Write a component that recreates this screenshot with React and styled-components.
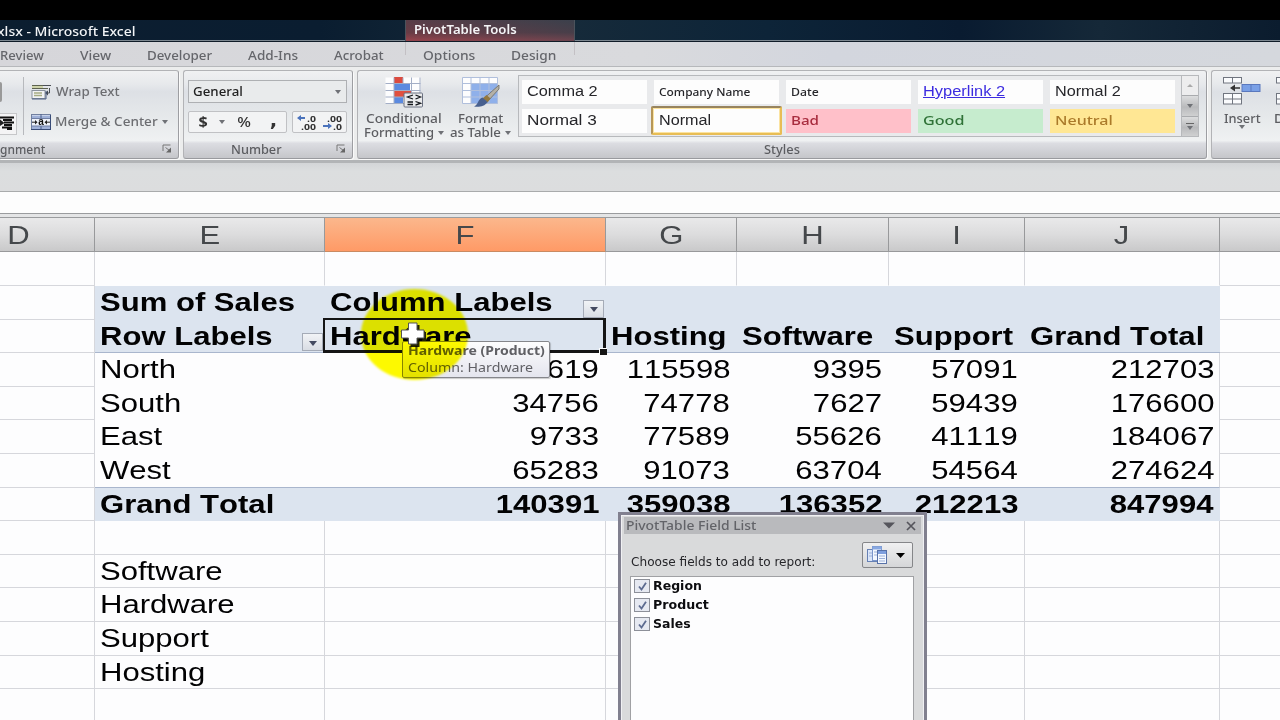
import { useLayoutEffect, useRef, useState } from 'react';
import styled, { createGlobalStyle, css } from 'styled-components';

const TABS = [
  { label: 'Review', w: 44 },
  { label: 'View', w: 31 },
  { label: 'Developer', w: 65 },
  { label: 'Add-Ins', w: 50 },
  { label: 'Acrobat', w: 50 },
  { label: 'Options', w: 52, ml: 3 },
  { label: 'Design', w: 45 },
];

const STYLES = [
  { label: 'Comma 2', w: 71, arial: true },
  { label: 'Company Name', w: 92, small: true },
  { label: 'Date', w: 28, small: true },
  { label: 'Hyperlink 2', w: 82, arial: true, color: '#3c2ce0', underline: true },
  { label: 'Normal 2', w: 66, arial: true },
  { label: 'Normal 3', w: 70, arial: true },
  { label: 'Normal', w: 52, arial: true, selected: true },
  { label: 'Bad', w: 28, color: '#a82c3e', bg: '#ffc0c9' },
  { label: 'Good', w: 41, color: '#2f7237', bg: '#c6ecce' },
  { label: 'Neutral', w: 58, color: '#ab7a2a', bg: '#ffe794' },
];

const COLUMNS = ['D', 'E', 'F', 'G', 'H', 'I', 'J', ''];

const PIVOT = [
  ['North', '26619', '115598', '9395', '57091', '212703'],
  ['South', '34756', '74778', '7627', '59439', '176600'],
  ['East', '9733', '77589', '55626', '41119', '184067'],
  ['West', '65283', '91073', '63704', '54564', '274624'],
];

const PRODUCTS = ['', 'Software', 'Hardware', 'Support', 'Hosting', ''];

// Stretches its text horizontally to exactly w pixels
function Fit({ w, children }) {
  const ref = useRef(null);
  const [scale, setScale] = useState(1);

  useLayoutEffect(() => {
    setScale(w / ref.current.offsetWidth);
  }, [w]);

  return (
    <FitBox $w={w}>
      <FitText ref={ref} style={{ transform: `scaleX(${scale})` }}>
        {children}
      </FitText>
    </FitBox>
  );
}

function WrapIcon() {
  return (
    <svg width="21" height="16" viewBox="0 0 21 16">
      <path d="M1 1.5h13M1 4.5h16" stroke="#5d6250" />
      <path d="M1 3h11" stroke="#c9cf9a" strokeWidth="1.6" />
      <path d="M12 1.5h8M18.5 4v5h-3" stroke="#4b4f55" fill="none" />
      <path d="M17 6.5v5l-3-2.5z" fill="#444a55" />
      <rect x="1" y="6.5" width="13" height="8" fill="#f2f3f4" stroke="#8a919d" />
      <path d="M3 9h8M3 11.5h8" stroke="#a7ac82" strokeWidth="1.4" />
      <path d="M1 15h14V7" stroke="#4c5e83" fill="none" />
    </svg>
  );
}

function MergeIcon() {
  return (
    <svg width="20" height="16" viewBox="0 0 20 16">
      <rect x=".5" y=".5" width="19" height="15" fill="#eef2fa" stroke="#71809f" />
      <path d="M1 3h18M1 13.5h18" stroke="#9fb1d8" strokeWidth="3" />
      <path d="M10 0v4M10 12v4" stroke="#4a5e8b" />
      <path d="M0 4.5h20M0 12h20" stroke="#6f7fa4" />
      <path d="M1 8.2h4M15 8.2h4" stroke="#222" />
      <path d="M4 6l2.5 2.2L4 10.5zM16 6l-2.5 2.2 2.5 2.3z" fill="#222" />
      <text x="10" y="11.3" textAnchor="middle" fontSize="10" fontWeight="bold" fontFamily="Liberation Sans" fill="#111">a</text>
      <path d="M0 15.5h20M19.5 1v14" stroke="#394c77" />
    </svg>
  );
}

function AlignIcon() {
  return (
    <svg width="14" height="14" viewBox="0 0 14 14">
      <path d="M0 1.5h14M3 4h9M4 6.5h10M4 9h8M2 11.5h10M7 13.5h5" stroke="#111" strokeWidth="1.8" />
      <path d="M0 3.5L4.5 7 0 10z" fill="#222" />
    </svg>
  );
}

function DecimalIcon({ increase }) {
  return (
    <svg width="21" height="17" viewBox="0 0 21 17">
      <g fontFamily="Open Sans" fontSize="9.5" fontWeight="700" fill="#333">
        <text x="20" y="7.5" textAnchor="end" textLength={increase ? 9 : 15} lengthAdjust="spacingAndGlyphs">{increase ? '.0' : '.00'}</text>
        <text x="20" y="15.5" textAnchor="end" textLength={increase ? 15 : 9} lengthAdjust="spacingAndGlyphs">{increase ? '.00' : '.0'}</text>
      </g>
      {increase ? (
        <path d="M1 4l4-3v2h4v2H5v2z" fill="#4a72bb" />
      ) : (
        <path d="M10 12L6 9v2H1v2h5v2z" fill="#4a72bb" />
      )}
    </svg>
  );
}

function ConditionalIcon() {
  return (
    <svg width="38" height="31" viewBox="0 0 38 31">
      <rect x=".5" y=".5" width="35" height="26" fill="#fdfdfe" />
      <path d="M9 0h9v6H9z" fill="#dc4b3f" />
      <path d="M9 7h16v6H9z" fill="#5b8ae0" />
      <path d="M9 14h17v6H9z" fill="#e0503f" />
      <path d="M9 20h9v7H9z" fill="#5b8ae0" />
      <path d="M.5 6.5h35M.5 13.5h35M.5 20h35M.5 26.5h20M9 .5v26M18 .5v6M26.5 .5v15M35 .5v17" stroke="#a3aec6" fill="none" />
      <rect x="19" y="16" width="18.5" height="14" rx="1" fill="#e9eaec" stroke="#6a7080" />
      <path d="M28 18l-5.5 2 5.5 2M22.5 25H28M22.5 27.5H28M30.5 18l5 2-5 2M30.5 24.5l5 1.7-5 2" stroke="#15181d" strokeWidth="1.3" fill="none" />
    </svg>
  );
}

function FormatTableIcon() {
  return (
    <svg width="38" height="31" viewBox="0 0 38 31">
      <rect x=".5" y=".5" width="35" height="26" fill="#fdfdfe" />
      <path d="M9 6.5h27v20H9z" fill="#8fb0ea" />
      <path d="M.5 .5h35M.5 6.5h35M.5 13.5h35M.5 20h35M.5 26.5h35M.5 .5v26M9 .5v26M18 .5v26M27 .5v26M35.5 .5v26" stroke="#b0bfdc" fill="none" />
      <path d="M37 8L23 20.500l3.500 3L37 12z" fill="#b5b1a6" stroke="#6b6861" strokeWidth=".8" />
      <path d="M24.500 18l4 3.500-3 4-5-4z" fill="#94793f" />
      <path d="M20.500 20.500l5 4.500c-3 5-9 5-13.500 4.500 4-1 4-8 8.500-9z" fill="#48608f" />
    </svg>
  );
}

function InsertIcon() {
  return (
    <svg width="38" height="29" viewBox="0 0 38 29">
      <g fill="#fafbfd" stroke="#70757f">
        <rect x=".5" y=".5" width="18" height="5.5" />
        <rect x=".5" y="16.5" width="18" height="10.5" />
        <path d="M9.5 .5V6M9.5 16.5V27M.5 22h18" />
      </g>
      <rect x="19" y="7.5" width="18" height="7" fill="#7aa0e6" stroke="#5a78bd" />
      <path d="M28 7.5v7" stroke="#5a78bd" />
      <path d="M10 11h7" stroke="#333" strokeWidth="1.5" />
      <path d="M7 11l5-3.5v7z" fill="#333" />
    </svg>
  );
}

function LauncherIcon() {
  return (
    <svg width="10" height="9" viewBox="0 0 10 9">
      <path d="M1 7V1h7.5" stroke="#777" fill="none" />
      <path d="M3.5 3.5l4 3" stroke="#777" />
      <path d="M9 3.5v5H4z" fill="#666" />
    </svg>
  );
}

function LayoutIcon() {
  return (
    <svg width="21" height="19" viewBox="0 0 21 19">
      <rect x=".5" y="3.5" width="10" height="12" fill="#dbe6fa" stroke="#6681b5" />
      <rect x="5.5" y=".5" width="9" height="14" fill="#f4f8ff" stroke="#7b96cb" />
      <rect x="5.5" y=".5" width="9" height="3" fill="#88a8e2" />
      <rect x="10.5" y="4.5" width="9" height="13" fill="#f4f8ff" stroke="#5872a8" />
      <path d="M11 6.5h8" stroke="#7e9fde" strokeWidth="3" />
      <path d="M12 10h6M12 12.5h6M12 15h6M7 6h3M7 9h3M2 7h3M2 10h3" stroke="#9bb0d8" />
    </svg>
  );
}

function CheckIcon() {
  return (
    <svg width="9" height="9" viewBox="0 0 9 9">
      <path d="M1 4.5l2.5 3L8 .8" stroke="#5d6b90" strokeWidth="1.8" fill="none" />
    </svg>
  );
}

function Ribbon() {
  return (
    <RibbonBar>
      <Group $w={179} $flat>
        <AlignBody>
          <AlignButtons>
            <EdgeButton />
            <AlignButton>
              <AlignIcon />
            </AlignButton>
          </AlignButtons>
          <Divider />
          <AlignLabels>
            <IconLabel>
              <WrapIcon />
              <Fit w={63}>Wrap Text</Fit>
            </IconLabel>
            <IconLabel>
              <MergeIcon />
              <Fit w={103}>Merge &amp; Center</Fit>
              <Arrow />
            </IconLabel>
          </AlignLabels>
        </AlignBody>
        <Caption $align="flex-start">
          <Fit w={45}>gnment</Fit>
          <Launcher>
            <LauncherIcon />
          </Launcher>
        </Caption>
      </Group>

      <Group $w={170}>
        <NumberBody>
          <Combo>
            <Fit w={50}>General</Fit>
            <Arrow />
          </Combo>
          <ButtonRow>
            <Buttons $w={99}>
              <Symbol $w={26} $bold>$</Symbol>
              <Slot>
                <Arrow />
              </Slot>
              <Symbol $w={32}>%</Symbol>
              <Symbol $w={25} $bold $comma>,</Symbol>
            </Buttons>
            <Buttons $w={55}>
              <DecimalIcon increase />
              <DecimalIcon />
            </Buttons>
          </ButtonRow>
        </NumberBody>
        <Caption $pad={24}>
          <Fit w={51}>Number</Fit>
          <Launcher>
            <LauncherIcon />
          </Launcher>
        </Caption>
      </Group>

      <Group $w={850}>
        <StylesBody>
          <BigButton $w={82}>
            <ConditionalIcon />
            <Fit w={76}>Conditional</Fit>
            <BigButtonLine>
              <Fit w={70}>Formatting</Fit>
              <Arrow />
            </BigButtonLine>
          </BigButton>
          <BigButton $w={71}>
            <FormatTableIcon />
            <Fit w={45}>Format</Fit>
            <BigButtonLine>
              <Fit w={51}>as Table</Fit>
              <Arrow />
            </BigButtonLine>
          </BigButton>
          <Gallery>
            <GalleryGrid>
              {STYLES.map((s) => (
                <StyleItem key={s.label} $bg={s.bg} $color={s.color} $arial={s.arial} $small={s.small} $selected={s.selected}>
                  <Fit w={s.w}>{s.underline ? <u>{s.label}</u> : s.label}</Fit>
                </StyleItem>
              ))}
            </GalleryGrid>
            <GalleryScroll>
              <ScrollButton $light>
                <Arrow $up />
              </ScrollButton>
              <ScrollButton>
                <Arrow />
              </ScrollButton>
              <ScrollButton $more>
                <Arrow />
              </ScrollButton>
            </GalleryScroll>
          </Gallery>
        </StylesBody>
        <Caption>
          <Fit w={36}>Styles</Fit>
        </Caption>
      </Group>

      <Group $w={140}>
        <CellsBody>
          <BigButton $w={38}>
            <InsertIcon />
            <Fit w={37}>Insert</Fit>
            <InsertArrow>
              <Arrow />
            </InsertArrow>
          </BigButton>
          <BigButton $w={42}>
            <InsertIcon />
            <Fit w={42}>Delete</Fit>
          </BigButton>
        </CellsBody>
        <Caption />
      </Group>
    </RibbonBar>
  );
}

function Sheet() {
  return (
    <SheetGrid>
      {COLUMNS.map((name) => (
        <ColumnHead key={name} $active={name === 'F'}>
          <Wide $center>{name}</Wide>
        </ColumnHead>
      ))}

      {COLUMNS.map((name) => (
        <Cell key={name} $noBottom={name !== 'D' && name !== ''} />
      ))}

      <Cell />
      <PivotHead>
        <Wide>Sum of Sales</Wide>
      </PivotHead>
      <PivotHead>
        <Wide>Column Labels</Wide>
        <FilterButton>
          <Arrow $dark />
        </FilterButton>
      </PivotHead>
      <PivotHead />
      <PivotHead />
      <PivotHead />
      <PivotHead />
      <Cell />

      <Cell />
      <PivotHead $line>
        <Wide>Row Labels</Wide>
        <FilterButton>
          <Arrow $dark />
        </FilterButton>
      </PivotHead>
      <PivotHead $line>
        <Wide>Hardware</Wide>
        <Selection />
      </PivotHead>
      {['Hosting', 'Software', 'Support', 'Grand Total'].map((label) => (
        <PivotHead key={label} $line>
          <Wide>{label}</Wide>
        </PivotHead>
      ))}
      <Cell />

      {PIVOT.map(([region, ...sales], i) => (
        <Row key={region}>
          <Cell />
          <PivotCell $line={i === PIVOT.length - 1}>
            <Wide>{region}</Wide>
          </PivotCell>
          {sales.map((n, j) => (
            <PivotCell key={j} $line={i === PIVOT.length - 1} $number $edge={j === sales.length - 1}>
              <Wide $right>{n}</Wide>
            </PivotCell>
          ))}
          <Cell />
        </Row>
      ))}

      <Cell />
      <PivotHead>
        <Wide>Grand Total</Wide>
      </PivotHead>
      {['140391', '359038', '136352', '212213', '847994'].map((n) => (
        <PivotHead key={n} $number>
          <Wide $right>{n}</Wide>
        </PivotHead>
      ))}
      <Cell />

      {PRODUCTS.map((product, i) => (
        <Row key={i}>
          {COLUMNS.map((name) => (
            <Cell key={name}>{name === 'E' && <Wide>{product}</Wide>}</Cell>
          ))}
        </Row>
      ))}
    </SheetGrid>
  );
}

function FieldList() {
  return (
    <Panel>
      <PanelInner>
        <PanelTitle>
          <Fit w={131}>PivotTable Field List</Fit>
          <PanelControls>
            <svg width="12" height="7" viewBox="0 0 12 7">
              <path d="M0 .5h12l-6 6z" fill="#55555c" />
            </svg>
            <svg width="10" height="10" viewBox="0 0 10 10">
              <path d="M1 1l8 8M9 1L1 9" stroke="#55555c" strokeWidth="1.7" />
            </svg>
          </PanelControls>
        </PanelTitle>
        <PanelHead>
          <Fit w={185}>Choose fields to add to report:</Fit>
          <LayoutButton>
            <LayoutIcon />
            <svg width="9" height="5" viewBox="0 0 9 5">
              <path d="M0 0h9L4.5 5z" fill="#000" />
            </svg>
          </LayoutButton>
        </PanelHead>
        <FieldBox>
          {[['Region', 49], ['Product', 56], ['Sales', 38]].map(([name, w]) => (
            <Field key={name}>
              <Check>
                <CheckIcon />
              </Check>
              <Fit w={w}>{name}</Fit>
            </Field>
          ))}
        </FieldBox>
      </PanelInner>
    </Panel>
  );
}

export default function App() {
  return (
    <Screen>
      <GlobalStyle />
      <TitleBar>
        <TitleText>
          <Fit w={139}>xlsx - Microsoft Excel</Fit>
        </TitleText>
        <ToolsTab>
          <Fit w={103}>PivotTable Tools</Fit>
        </ToolsTab>
      </TitleBar>
      <TabBar>
        {TABS.map((t) => (
          <Tab key={t.label} $ml={t.ml}>
            <Fit w={t.w}>{t.label}</Fit>
          </Tab>
        ))}
        <ToolsEdges />
      </TabBar>
      <Ribbon />
      <FormulaGap />
      <FormulaBar />
      <SheetEdge />
      <Sheet />
      <Tooltip>
        <Fit w={137}>
          <b>Hardware (Product)</b>
        </Fit>
        <Fit w={125}>Column: Hardware</Fit>
      </Tooltip>
      <Highlight />
      <Cursor width="34" height="34" viewBox="0 0 34 34">
        <path d="M15 7h8.500v7H30v9h-6.500v6h-9v-6H7v-9z" fill="#000" opacity=".85" />
        <path d="M12.500 5H21v7h7v8h-7v6h-8.500v-6h-7v-8h7z" fill="#fff" stroke="#555" />
      </Cursor>
      <FieldList />
    </Screen>
  );
}

const GlobalStyle = createGlobalStyle`
  * {
    box-sizing: border-box;
  }
  body {
    margin: 0;
    overflow: hidden;
    background: #000;
    font-family: 'Noto Sans', 'Open Sans', sans-serif;
  }
  svg {
    display: block;
    flex: none;
  }
`;

const Screen = styled.div`
  position: relative;
  width: 1280px;
  height: 720px;
  overflow: hidden;
  padding-top: 20px;
  background: #000;
`;

const FitBox = styled.span`
  display: block;
  flex: none;
  width: ${(p) => p.$w}px;
  white-space: nowrap;
`;

const FitText = styled.span`
  display: inline-block;
  transform-origin: left;
`;

const Arrow = styled.i`
  flex: none;
  width: 0;
  height: 0;
  border: 3.5px solid transparent;
  border-top: 4px solid ${(p) => (p.$dark ? '#444a60' : '#6f7176')};
  border-bottom: 0;
  ${(p) =>
    p.$dark &&
    css`
      border-width: 5px 4.5px 0;
    `}
  ${(p) =>
    p.$up &&
    css`
      border-top: 0;
      border-bottom: 3px solid #aaa;
    `}
`;

const TitleBar = styled.header`
  display: flex;
  height: 22px;
  background: linear-gradient(90deg, #0c1e30, #0a1d30 25%, #172b3a 42%, #0d2438 60%, #091b30 75%, #152838 86%, #0b1c2e);
  border-bottom: 1px solid #101c28;
  box-shadow: inset 0 -1px #7c8790;
`;

const TitleText = styled.div`
  width: 408px;
  margin-left: -3px;
  color: #f2f4f6;
  font-size: 13px;
  font-weight: 500;
  line-height: 22px;
`;

const ToolsTab = styled.div`
  width: 170px;
  padding-left: 8px;
  color: #f4f4f6;
  font-size: 12px;
  font-weight: 600;
  line-height: 19px;
  background: linear-gradient(100deg, rgba(120, 60, 70, 0.5), rgba(60, 64, 76, 0.6)), linear-gradient(#38404b, #5a3c45 60%, #b04a52 95%);
  border-left: 1px solid #4b535c;
  border-right: 1px solid #4b535c;
`;

const TabBar = styled.nav`
  position: relative;
  display: flex;
  gap: 36px;
  height: 25px;
  background: linear-gradient(90deg, #d6d6da, #d9dadd 50%, #d3d6de 65%, #d5d8dd);
  border-bottom: 1px solid #b6b8bb;
`;

const Tab = styled.div`
  margin-left: ${(p) => p.$ml || 0}px;
  color: #65666b;
  font-size: 12.5px;
  font-weight: 500;
  line-height: 27px;
`;

// Sides of the contextual tab, carried a little way below the title bar
const ToolsEdges = styled.div`
  position: absolute;
  left: 405px;
  top: 0;
  width: 170px;
  height: 13px;
  border: solid #c3c0c4;
  border-width: 0 1px;
`;

const RibbonBar = styled.div`
  display: flex;
  gap: 4px;
  height: 96px;
  padding: 3px 0 5px;
  background: #eceded;
  border-bottom: 3px solid #b2b4b6;
`;

const Group = styled.section`
  display: flex;
  flex: none;
  flex-direction: column;
  width: ${(p) => p.$w}px;
  height: 89px;
  color: #5c5d61;
  font-size: 12.5px;
  font-weight: 500;
  background: linear-gradient(#f0f1f2, #e7e9ec 15%, #dde0e5 24%, #e5e8ea 50%, #eff1f2 80%, #dcdde2 83%, #c5c6ca);
  border: 1px solid #b2b3b6;
  border-bottom-color: #999a9e;
  border-right-color: #9d9ea2;
  border-radius: ${(p) => (p.$flat ? '0 3px 3px 0' : '3px')};
  border-left-width: ${(p) => (p.$flat ? 0 : 1)}px;
  box-shadow: 1px 1px #fafafa;
`;

const Caption = styled.div`
  position: relative;
  display: flex;
  align-items: center;
  justify-content: ${(p) => p.$align || 'center'};
  height: 18px;
  padding-right: ${(p) => p.$pad || 0}px;
  line-height: 19px;
`;

const Launcher = styled.span`
  position: absolute;
  right: 6px;
  top: 4px;
`;

const AlignBody = styled.div`
  display: flex;
  height: 70px;
  padding-top: 6px;
`;

const AlignButtons = styled.div`
  display: flex;
  flex-direction: column;
  gap: 11px;
  width: 23px;
  padding-top: 5px;
`;

const EdgeButton = styled.div`
  width: 2px;
  height: 20px;
  background: #999;
  border-radius: 0 2px 2px 0;
`;

const AlignButton = styled.div`
  width: 17px;
  height: 22px;
  padding-top: 2px;
  background: #f4f4f5;
  border: 1px solid #c6c7c9;
  border-left: 0;
`;

const Divider = styled.div`
  width: 1px;
  height: 58px;
  background: #b7b9bd;
`;

const AlignLabels = styled.div`
  display: flex;
  flex-direction: column;
  gap: 10px;
  padding: 5px 0 0 7px;
`;

const IconLabel = styled.div`
  display: flex;
  align-items: center;
  gap: 4px;
  height: 20px;
  color: #6c6d71;
  line-height: 20px;
`;

const NumberBody = styled.div`
  height: 70px;
  padding: 9px 0 0 4px;
`;

const Combo = styled.div`
  display: flex;
  align-items: center;
  justify-content: space-between;
  width: 159px;
  height: 23px;
  padding: 0 5px 0 4px;
  color: #222;
  line-height: 20px;
  background: #e9ebec;
  border: 1px solid #aeb0b3;
`;

const ButtonRow = styled.div`
  display: flex;
  gap: 5px;
  margin-top: 8px;
`;

const Buttons = styled.div`
  display: flex;
  align-items: center;
  justify-content: space-around;
  width: ${(p) => p.$w}px;
  height: 22px;
  background: #f2f3f4;
  border: 1px solid #c0c1c4;
  border-radius: 2px;
`;

const Slot = styled.span`
  display: flex;
  justify-content: center;
  width: 10px;
`;

const Symbol = styled.span`
  width: ${(p) => p.$w}px;
  text-align: center;
  color: #333;
  font-size: 14px;
  font-weight: ${(p) => (p.$bold ? 700 : 500)};
  line-height: 20px;
  transform: scaleX(1.15);
  ${(p) =>
    p.$comma &&
    css`
      font-family: 'DejaVu Sans', sans-serif;
      font-size: 17px;
      line-height: 14px;
      padding-bottom: 5px;
    `}
`;

const StylesBody = styled.div`
  display: flex;
  height: 70px;
  padding: 4px 0 0 5px;
`;

const BigButton = styled.div`
  display: flex;
  flex: none;
  flex-direction: column;
  align-items: center;
  width: ${(p) => p.$w}px;
  padding-top: 2px;
  line-height: 14px;

  > svg {
    margin-bottom: 4px;
  }
`;

const BigButtonLine = styled.div`
  display: flex;
  align-items: center;
  gap: 4px;
`;

const Gallery = styled.div`
  display: flex;
  width: 681px;
  height: 62px;
  margin-left: 2px;
  background: #e9eaec;
  border: 1px solid #b7b9bc;
`;

const GalleryGrid = styled.div`
  display: grid;
  grid-template-columns: repeat(5, 125px);
  grid-template-rows: 24px 24px;
  gap: 5px 7px;
  width: 662px;
  padding: 4px 0 0 3px;
`;

const StyleItem = styled.div`
  padding-left: 5px;
  color: ${(p) => p.$color || '#26262a'};
  font-family: ${(p) => (p.$arial ? "'Liberation Sans', Arial, sans-serif" : "'Noto Sans', sans-serif")};
  font-size: ${(p) => (p.$small ? '10.5px' : p.$arial ? '14px' : '13px')};
  font-weight: ${(p) => (p.$arial ? 400 : 500)};
  line-height: ${(p) => (p.$small ? 25 : 23)}px;
  background: ${(p) => p.$bg || '#fdfdfd'};
  ${(p) =>
    p.$selected &&
    css`
      margin: -3px -3px -2px;
      padding-left: 6px;
      line-height: 25px;
      border: 2px solid #e8bd55;
      border-top-color: #97845f;
      border-left-color: #b59658;
      border-radius: 2px;
      box-shadow: inset 0 0 0 1px #fbe3a0;
    `}
`;

const GalleryScroll = styled.div`
  display: flex;
  flex: 1;
  flex-direction: column;
  border-left: 1px solid #b7b9bc;
`;

const ScrollButton = styled.div`
  display: flex;
  flex: 1;
  flex-direction: column;
  align-items: center;
  justify-content: center;
  background: ${(p) => (p.$light ? '#ededee' : 'linear-gradient(#dcddde, #b9babc 55%, #cfd0d1)')};
  border-top: ${(p) => (p.$light ? 0 : 1)}px solid #a9abae;
  ${(p) =>
    p.$more &&
    css`
      &::before {
        content: '';
        width: 8px;
        height: 1px;
        margin-bottom: 2px;
        background: #666;
      }
    `}
`;

const CellsBody = styled.div`
  display: flex;
  gap: 13px;
  height: 70px;
  padding: 4px 0 0 11px;

  svg {
    margin-bottom: 6px;
  }
`;

const InsertArrow = styled.div`
  padding-top: 5px;
`;

const FormulaGap = styled.div`
  height: 29px;
  background: linear-gradient(#d3d5d7, #dcdedf 30%, #dcddde);
  border-bottom: 1px solid #a9abac;
`;

const FormulaBar = styled.div`
  height: 22px;
  background: #fdfdfd;
  border-bottom: 1px solid #9a9c9e;
`;

const SheetEdge = styled.div`
  height: 4px;
  background: #e4e5e6;
  border-bottom: 1px solid #9a9c9e;
`;

const SheetGrid = styled.main`
  display: grid;
  grid-template-columns: 95px 230px 281px 131px 152px 136px 195px 61px;
  grid-template-rows: 34.4px;
  grid-auto-rows: 33.6px;
  height: 510px;
  overflow: hidden;
  color: #020203;
  font-family: 'Liberation Sans', Arial, sans-serif;
  font-size: 26.5px;
  font-kerning: none;
  line-height: 33px;
  background: #fdfdfe;
`;

const Wide = styled.span`
  display: inline-block;
  white-space: nowrap;
  transform: scaleX(1.172);
  transform-origin: ${(p) => (p.$center ? 'center' : p.$right ? 'right' : 'left')};
`;

const ColumnHead = styled.div`
  overflow: hidden;
  padding-top: 0.5px;
  text-align: center;
  color: #45484b;
  background: ${(p) => (p.$active ? 'linear-gradient(#fbb78c, #ff9a66)' : 'linear-gradient(#e9e9ea, #dcdcdd 50%, #c9c9ca)')};
  border-right: 1px solid #98999b;
  border-bottom: 1px solid ${(p) => (p.$active ? '#c98a62' : '#98999b')};

  &:first-child {
    padding-right: 57px;
  }
`;

const Row = styled.div`
  display: contents;
`;

const Cell = styled.div`
  padding-left: 5px;
  border-right: 1px solid #d6d7dc;
  border-bottom: 1px solid ${(p) => (p.$noBottom ? 'transparent' : '#d6d7dc')};
`;

const PivotHead = styled.div`
  position: relative;
  display: flex;
  justify-content: ${(p) => (p.$number ? 'flex-end' : 'flex-start')};
  padding: 0 7px 0 5px;
  font-weight: 700;
  line-height: 32px;
  background: #dce4ef;
  border-bottom: 1px solid ${(p) => (p.$line ? '#a9b6cd' : '#dce4ef')};
`;

const PivotCell = styled.div`
  display: flex;
  justify-content: ${(p) => (p.$number ? 'flex-end' : 'flex-start')};
  padding: 0 ${(p) => (p.$edge ? 5 : 7)}px 0 5px;
  border-right: ${(p) => (p.$edge ? '1px solid #d6d7dc' : 0)};
  border-bottom: ${(p) => (p.$line ? '1px solid #a9b6cd' : 0)};
`;

const FilterButton = styled.div`
  position: absolute;
  right: 2px;
  bottom: 1px;
  display: flex;
  align-items: center;
  justify-content: center;
  width: 21px;
  height: 18px;
  padding-top: 2px;
  background: linear-gradient(#f1f3f6, #d9dde4);
  border: 1px solid #a5abb7;
`;

// Heavy frame round the active cell with its fill handle
const Selection = styled.div`
  position: absolute;
  inset: -2px 0 -1px -2px;
  z-index: 1;
  border: 2.5px solid #151515;
  border-width: 2px 3px 3px 2px;

  &::after {
    content: '';
    position: absolute;
    right: -4px;
    bottom: -5px;
    width: 7px;
    height: 6px;
    background: #151515;
    border: solid #fff;
    border-width: 1px 0 0 1px;
  }
`;

const Tooltip = styled.div`
  position: absolute;
  left: 402px;
  top: 341px;
  z-index: 2;
  width: 148px;
  height: 37px;
  padding-left: 5px;
  color: #606065;
  font-size: 12.5px;
  line-height: 17px;
  background: linear-gradient(#fdfdfe, #e4e5ee);
  border: 1px solid #85868b;
  border-radius: 2px;
  box-shadow: 1px 1px 1px rgba(0, 0, 0, 0.2);
`;

const Highlight = styled.div`
  position: absolute;
  left: 361px;
  top: 289px;
  z-index: 3;
  width: 107px;
  height: 91px;
  border-radius: 50%;
  background: #fffb00;
  mix-blend-mode: multiply;
  filter: blur(1px);
`;

const Cursor = styled.svg`
  position: absolute;
  left: 396px;
  top: 318px;
  z-index: 4;
`;

const Panel = styled.aside`
  position: absolute;
  left: 618px;
  top: 512px;
  z-index: 2;
  width: 309px;
  height: 230px;
  padding: 1px;
  background: #f0f0f3;
  border: 3px solid #81808f;
`;

const PanelInner = styled.div`
  height: 100%;
  padding: 1px 2px;
  background: #d9dadb;
`;

const PanelTitle = styled.div`
  display: flex;
  align-items: center;
  justify-content: space-between;
  height: 17px;
  padding: 0 5px 0 2px;
  color: #626368;
  font-size: 12px;
  font-weight: 500;
  line-height: 17px;
  background: #b9babd;
`;

const PanelControls = styled.div`
  display: flex;
  align-items: center;
  gap: 11px;
`;

const PanelHead = styled.div`
  display: flex;
  justify-content: space-between;
  height: 42px;
  padding: 8px 8px 0 7px;
  color: #26262a;
  font-family: 'DejaVu Sans Condensed', 'DejaVu Sans', sans-serif;
  font-size: 12px;
  line-height: 41px;
`;

const LayoutButton = styled.div`
  display: flex;
  align-items: center;
  justify-content: space-between;
  width: 51px;
  height: 26px;
  padding: 0 7px 0 4px;
  background: linear-gradient(#f0f0f1, #d5d6d8);
  border: 1px solid #858689;
  border-radius: 2px;
`;

const FieldBox = styled.div`
  width: 284px;
  height: 160px;
  margin-left: 6px;
  background: #fdfdfe;
  border: 1px solid #a0a1a4;
`;

const Field = styled.div`
  display: flex;
  align-items: center;
  gap: 3px;
  height: 19px;
  padding: 0 0 1px 3px;
  color: #0d0d10;
  font-family: 'DejaVu Sans', sans-serif;
  font-size: 11.5px;
  font-weight: 700;
  line-height: 17px;
`;

const Check = styled.span`
  display: flex;
  flex: none;
  align-items: center;
  justify-content: center;
  width: 16px;
  height: 14px;
  background: #e6e9f1;
  border: 1px solid #8d9099;
`;
